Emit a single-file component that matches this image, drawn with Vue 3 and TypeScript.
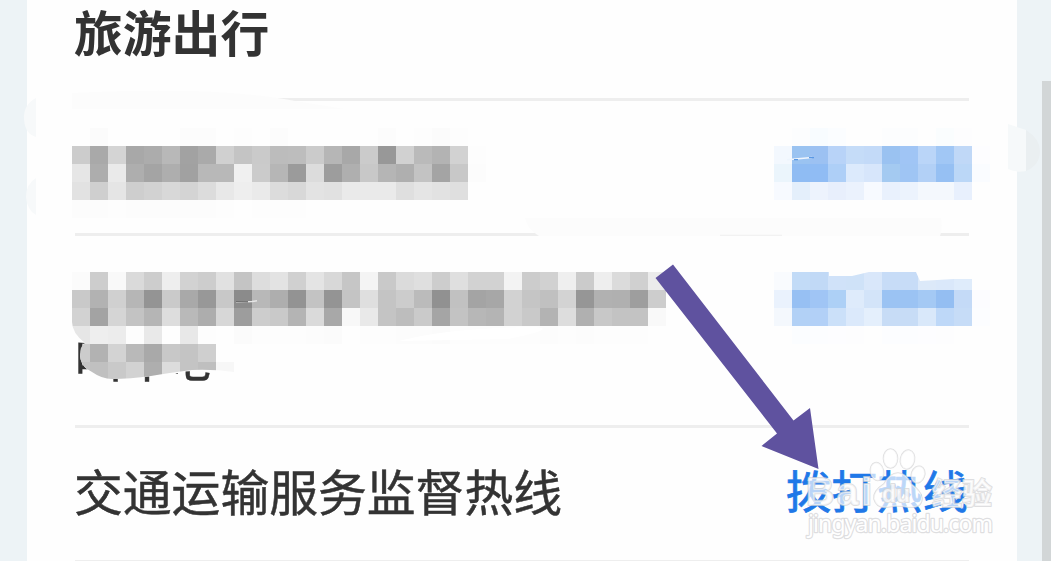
<script setup lang="ts">
interface Cell { x: number; y: number; fill: string }

const SIZE = 18

function tiles(rows: string[], x0: number, y0: number): Cell[] {
  return rows.flatMap((row, r) =>
    row.split(' ').map((c, i) => ({
      x: x0 + i * SIZE,
      y: y0 + r * SIZE,
      fill: '#' + (c.length === 2 ? c + c + c : c),
    })),
  )
}

const nameOne = tiles([
  'fe fb fe fe fe fe fc fc fe fd fe fc fe fe fe fe fe fc fe fd fb fd fe',
  'cc a9 d4 a8 ac b8 a2 aa d0 c4 ca bc bd cb b6 a8 cb 98 d1 ba b3 d2 fd',
  'e6 ad ea ae a4 ae a1 b8 b8 f0 cb b6 9b dc 9d af c8 b5 af c3 a4 c8 fc',
  'e2 cf e5 ce d2 d8 d4 dc e8 ee ea dc d8 e3 e1 ea ea ea df e5 e2 df fe',
  'fc fc fd fc fc fc fc fc fd fe fd fd fd fe fe fe fe fe fe fe fe fe fe',
], 0, 27)

const nameTwo = tiles([
  'fb cd f9 da cd ee d2 cd e1 c4 dd e3 d0 e4 d8 c6 f4 c9 db df cd df d2 d2 f3 cc d1 ef cb ee db d0 eb',
  'c9 b2 d0 b6 94 ca a9 98 c8 8b b8 ae 93 c3 94 c4 df c4 cc bb 91 c1 a4 a7 d2 c5 c0 d3 96 b1 b0 9e cd',
  'd2 a3 d5 c3 b5 dd b9 ad d7 9d cd c9 b4 da a8 f8 e9 c4 bd ca a5 c3 b7 b4 d2 c9 b3 dd b0 c8 c3 c3 f9',
  'e6 ee ec fd e9 fe e8 fd fe fb fd fd fd fc fb fe fd fd fc fc fb fd fd fd fd fd fc fd fc fd fd fd fe',
  'cc b2 d3 b9 a9 c8 c4 cf fe',
  'c5 c0 c9 d2 ae dc c4 bf f7',
], 0, 36)

const linkOne = tiles([
  'fefefe fcfdfe f8fcff fbfdff fefefe fefefe fcfdfe fcfdfe fefefe fafdfe fdfdfe fefefe',
  'f3f8fe 9ac3f1 9cc1f2 b8d3f8 c5dcf8 c3daf8 9ac2f1 a0c5f5 bad5f8 a1c7f5 c0d8f7 fdfdff',
  'ebf5fc 8fbcf3 90bcf4 aecff7 dceafc d7e6fb a4caf1 9fc5f4 b2d0f6 96c0f3 bbd7f7 fafcff',
  'f7faff e4effb edf3fd e8effc ebf2fd f7faff e9f1fd ecf3fd f4f8fd f4f8fd e8f0fd fefefe',
], 0, 27)

const linkTwo = tiles([
  'f9fbfe c2dbf7 c1d9f6 d0e2f9 cfe2f8 d9e7fa c7dcf7 c7dcf7 dce9f9 dae8fa dfecfb fefefe',
  'eaf2fd 97c0f3 a0c5f5 add0f6 deebfb d3e4f9 9bc3f3 9bc3f3 a4c9f4 94bef2 c4daf7 fcfcff',
  'f4f8fd b2d1f6 b2d0f7 cbe0f9 dbe9fb e4effc c7dcf6 c7dcf6 d9e8fa bed8f8 c6dcf7 fcfdff',
  'fefefe fbfdff fcfdff fdfdff fdfdfe fefefe fcfdff fcfdff fdfdff fdfdfe fefefe fefefe',
], 0, 36)
</script>

<template>
  <div class="page">
    <main class="card">
      <h1 class="title">旅游出行</h1>

      <section class="row short">
        <svg class="mosaic" width="414" height="132" shape-rendering="crispEdges">
          <rect v-for="(c, i) in nameOne" :key="i" :x="c.x" :y="c.y" width="18" height="18" :fill="c.fill" />
        </svg>
        <svg class="mosaic link-mosaic" width="216" height="132">
          <g shape-rendering="crispEdges">
            <rect v-for="(c, i) in linkOne" :key="i" :x="c.x" :y="c.y" width="18" height="18" :fill="c.fill" />
          </g>
          <path d="M13 58.7L38 56.5" stroke="#eef5fd" stroke-width="1.4" />
          <path d="M20 58.6h4M35 56.6h5" stroke="#5a98e4" stroke-width="1.3" />
        </svg>
      </section>

      <section class="row tall">
        <span class="remnant">叫中心</span>
        <svg class="mosaic" width="594" height="189">
          <defs>
            <clipPath id="nameClip">
              <path d="M0 0H594V132H162V136Q140 133 120 134Q96 137 79 140Q58 143 40 143Q30 143 20 136Q8 130 8 119Q8 110 13 107Q0 97 0 86Z" />
            </clipPath>
          </defs>
          <path d="M0 36H594V126H300Q210 143 160 142L138 137Q120 133 106 137Q80 141 40 143Q8 137 8 119L13 107L0 106Z" fill="#fefefe" />
          <g clip-path="url(#nameClip)" shape-rendering="crispEdges">
            <rect v-for="(c, i) in nameTwo" :key="i" :x="c.x" :y="c.y" width="18" height="18" :fill="c.fill" />
          </g>
          <path d="M164 66.3l16-.8 5-.7" stroke="#e6e6e6" stroke-width="1.4" fill="none" />
          <path d="M164 65.8h12" stroke="#555" stroke-width="1.1" />
          <path d="M327 105Q376 92 460 91Q490 92 436 103Z" fill="#fff" />
        </svg>
        <svg class="mosaic link-mosaic" width="216" height="189">
          <defs>
            <clipPath id="linkClip">
              <path d="M0 36H55V40H78L95 36H142L146 45L180 43H216V108H0Z" />
            </clipPath>
          </defs>
          <g clip-path="url(#linkClip)">
            <rect v-for="(c, i) in linkTwo" :key="i" :x="c.x" :y="c.y" width="18" height="18" :fill="c.fill" shape-rendering="crispEdges" />
          </g>
        </svg>
      </section>

      <section class="row short">
        <span class="name">交通运输服务监督热线</span>
        <a class="call">拨打热线</a>
      </section>
      <div class="row"></div>
    </main>

    <div class="scrollbar"></div>

    <svg class="overlay" width="1051" height="561" viewBox="0 0 1051 561">
      <path d="M36 98Q23 105 24 119Q25 134 36 137Z" fill="#f7f9fa" />
      <path d="M36 178Q26 184 26 197Q27 210 36 215Z" fill="#f7f9fa" />
      <path d="M72 93Q220 86 295 101L345 109H72Z" fill="#fcfcfc" />
      <path d="M1008 124L1026 130V171Q1016 173 1008 169Z" fill="#f6f9fa" />
      <path d="M1026 130Q1040 139 1040 151Q1040 165 1026 171Z" fill="#eaeff1" />
      <path d="M525 218H941Q943 228 940 236H539Q527 229 525 218Z" fill="#fcfcfc" />
      <path d="M720 235.3H782" stroke="#efefef" />

      <path d="M673 264.5L793.5 420.5L810 408L818.5 469L761.5 446L777 433.5L655.5 278Z" fill="#5f529f" />

      <g class="watermark">
        <g class="paw">
          <ellipse cx="877" cy="471.5" rx="6.5" ry="9" transform="rotate(-12 877 471.5)" />
          <ellipse cx="890.5" cy="458.5" rx="7" ry="9.5" />
          <ellipse cx="907.5" cy="459.5" rx="7" ry="9.5" transform="rotate(12 907.5 459.5)" />
          <ellipse cx="918" cy="474.5" rx="6.5" ry="8.5" transform="rotate(20 918 474.5)" />
          <path d="M898 473Q890 473 884 484Q873 491 874 499Q877 509 888 507Q898 505 907 507Q922 509 922 498Q921 491 911 484Q906 473 898 473Z" />
        </g>
        <text x="806" y="505" class="brand" textLength="66">Bai</text>
        <text x="882" y="502" class="du">du</text>
        <text x="932" y="504" class="cn">经验</text>
        <text x="808" y="531.5" class="domain" textLength="185">jingyan.baidu.com</text>
      </g>
    </svg>
  </div>
</template>

<style>
html,
body {
  margin: 0;
  overflow: hidden;
}
</style>

<style scoped>
.page {
  position: relative;
  width: 1051px;
  height: 561px;
  overflow: hidden;
  display: flex;
  justify-content: space-between;
  background: #edf3f6;
  font-family: "Noto Sans CJK SC", sans-serif;
  color: #333;
}
.card {
  box-sizing: border-box;
  width: 990px;
  margin-left: 27px;
  padding: 0 48px;
  background: #fefefe;
}
.title {
  box-sizing: border-box;
  height: 98px;
  margin: 0 0 0 -1px;
  font-size: 48.8px;
  font-weight: 700;
  line-height: 61px;
}
.row {
  position: relative;
  box-sizing: border-box;
  display: flex;
  justify-content: space-between;
  border-top: 3px solid #eee;
}
.short {
  height: 135px;
  align-items: center;
}
.tall {
  height: 192px;
}
.mosaic {
  position: relative;
  display: block;
  flex: none;
  margin-left: -3px;
}
.short .mosaic {
  align-self: flex-start;
}
.link-mosaic {
  margin-right: -21px;
}
.remnant {
  position: absolute;
  left: -1px;
  top: 84px;
  font-size: 48.8px;
  line-height: 72px;
  -webkit-text-stroke: 0.5px #333;
}
.name {
  margin-left: -1px;
  padding-bottom: 8px;
  font-size: 48.8px;
  line-height: 72px;
  white-space: nowrap;
  -webkit-text-stroke: 0.5px #333;
}
.call {
  padding-bottom: 11px;
  font-size: 45.6px;
  line-height: 68px;
  color: #1f78e8;
  -webkit-text-stroke: 0.7px #1f78e8;
  margin-right: 1px;
  white-space: nowrap;
}
.scrollbar {
  width: 9px;
  height: 480px;
  margin-top: 81px;
  background: #d2d6d7;
}
.overlay {
  position: absolute;
  left: 0;
  top: 0;
  pointer-events: none;
}
.watermark {
  fill: #fff;
  fill-opacity: 0.7;
  stroke: #d4d4d6;
  stroke-opacity: 0.75;
  stroke-width: 2px;
  stroke-linejoin: round;
  paint-order: stroke;
}
.paw {
  stroke-width: 1.6px;
}
.brand {
  font: 700 39px "Liberation Sans", sans-serif;
}
.du {
  font: 700 23px "Liberation Sans", sans-serif;
}
.cn {
  font: 700 30px "Noto Sans CJK SC", sans-serif;
}
.domain {
  font: 400 23px "Noto Sans", sans-serif;
  fill-opacity: 1;
  stroke-width: 2.4px;
}
</style>
